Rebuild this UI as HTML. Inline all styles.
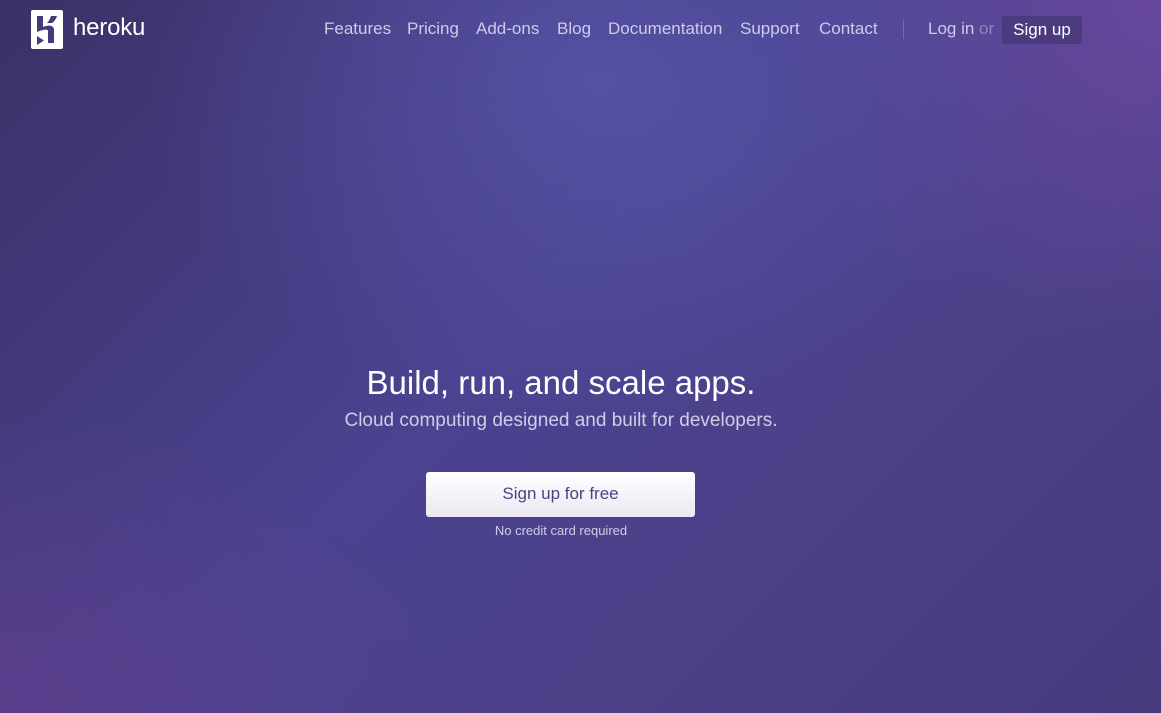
<!DOCTYPE html>
<html><head><meta charset="utf-8"><style>
html,body{margin:0;padding:0}
body{width:1161px;height:713px;overflow:hidden;font-family:"Liberation Sans",sans-serif;position:relative;
background:
radial-gradient(ellipse 450px 350px at 600px 80px, rgba(86,82,166,0.9), rgba(86,82,166,0) 100%),
radial-gradient(ellipse 400px 350px at 1161px 0px, rgba(106,72,158,0.9), rgba(106,72,158,0) 100%),
radial-gradient(ellipse 450px 300px at 0px 713px, rgba(92,62,140,0.9), rgba(92,62,140,0) 100%),
linear-gradient(135deg,#3b3168 0%,#4a4390 45%,#4c4088 70%,#443a7c 100%);}
.logo{position:absolute;left:31px;top:10px;width:32px;height:39px;background:#fff;border-radius:2px}
.brand{position:absolute;left:73px;top:14px;color:#fff;font-size:24px;letter-spacing:-0.2px}
.n{position:absolute;top:19px;color:#cfcbe8;font-size:17px}
.sep{position:absolute;left:903px;top:19px;width:1px;height:20px;background:rgba(255,255,255,0.2)}
.login i{font-style:normal;color:#8f86c0}
.signup{position:absolute;left:1002px;top:16px;width:80px;height:28px;background:#4b3a7e;border-radius:3px;color:#fff;font-size:17px;text-align:center;line-height:27px}
h1{position:absolute;top:364px;left:0;width:1122px;text-align:center;margin:0;font-weight:normal;color:#fff;font-size:33px}
.sub{position:absolute;top:410px;left:0;width:1122px;text-align:center;color:#d0cce8;font-size:19px}
.btn{position:absolute;left:426px;top:472px;width:269px;height:45px;background:linear-gradient(#fff,#ebe8f2);border-radius:3px;color:#4f3f82;font-size:17px;text-align:center;line-height:44px}
.nc{position:absolute;top:523px;left:0;width:1122px;text-align:center;color:#d0cce8;font-size:13px}
</style></head><body>
<div class="logo"><svg width="32" height="39" viewBox="0 0 32 39"><path d="M6 6h6v11c5-2 10-2 11 2v14h-6V21c0-2-4-2-11 1zM6 26l7 4.5-7 4.5z" fill="#443a7c"/><path d="M20 6h6c-1 3-3 6-5 7h-5c2-2 3-4 4-7z" fill="#443a7c"/></svg></div>
<div class="brand">heroku</div>
<span class="n" style="left:324px">Features</span>
<span class="n" style="left:407px">Pricing</span>
<span class="n" style="left:476px">Add-ons</span>
<span class="n" style="left:557px">Blog</span>
<span class="n" style="left:608px">Documentation</span>
<span class="n" style="left:740px">Support</span>
<span class="n" style="left:819px">Contact</span>
<div class="sep"></div>
<span class="n login" style="left:928px">Log in <i>or</i></span>
<div class="signup">Sign up</div>
<h1>Build, run, and scale apps.</h1>
<div class="sub">Cloud computing designed and built for developers.</div>
<div class="btn">Sign up for free</div>
<div class="nc">No credit card required</div>
</body></html>
